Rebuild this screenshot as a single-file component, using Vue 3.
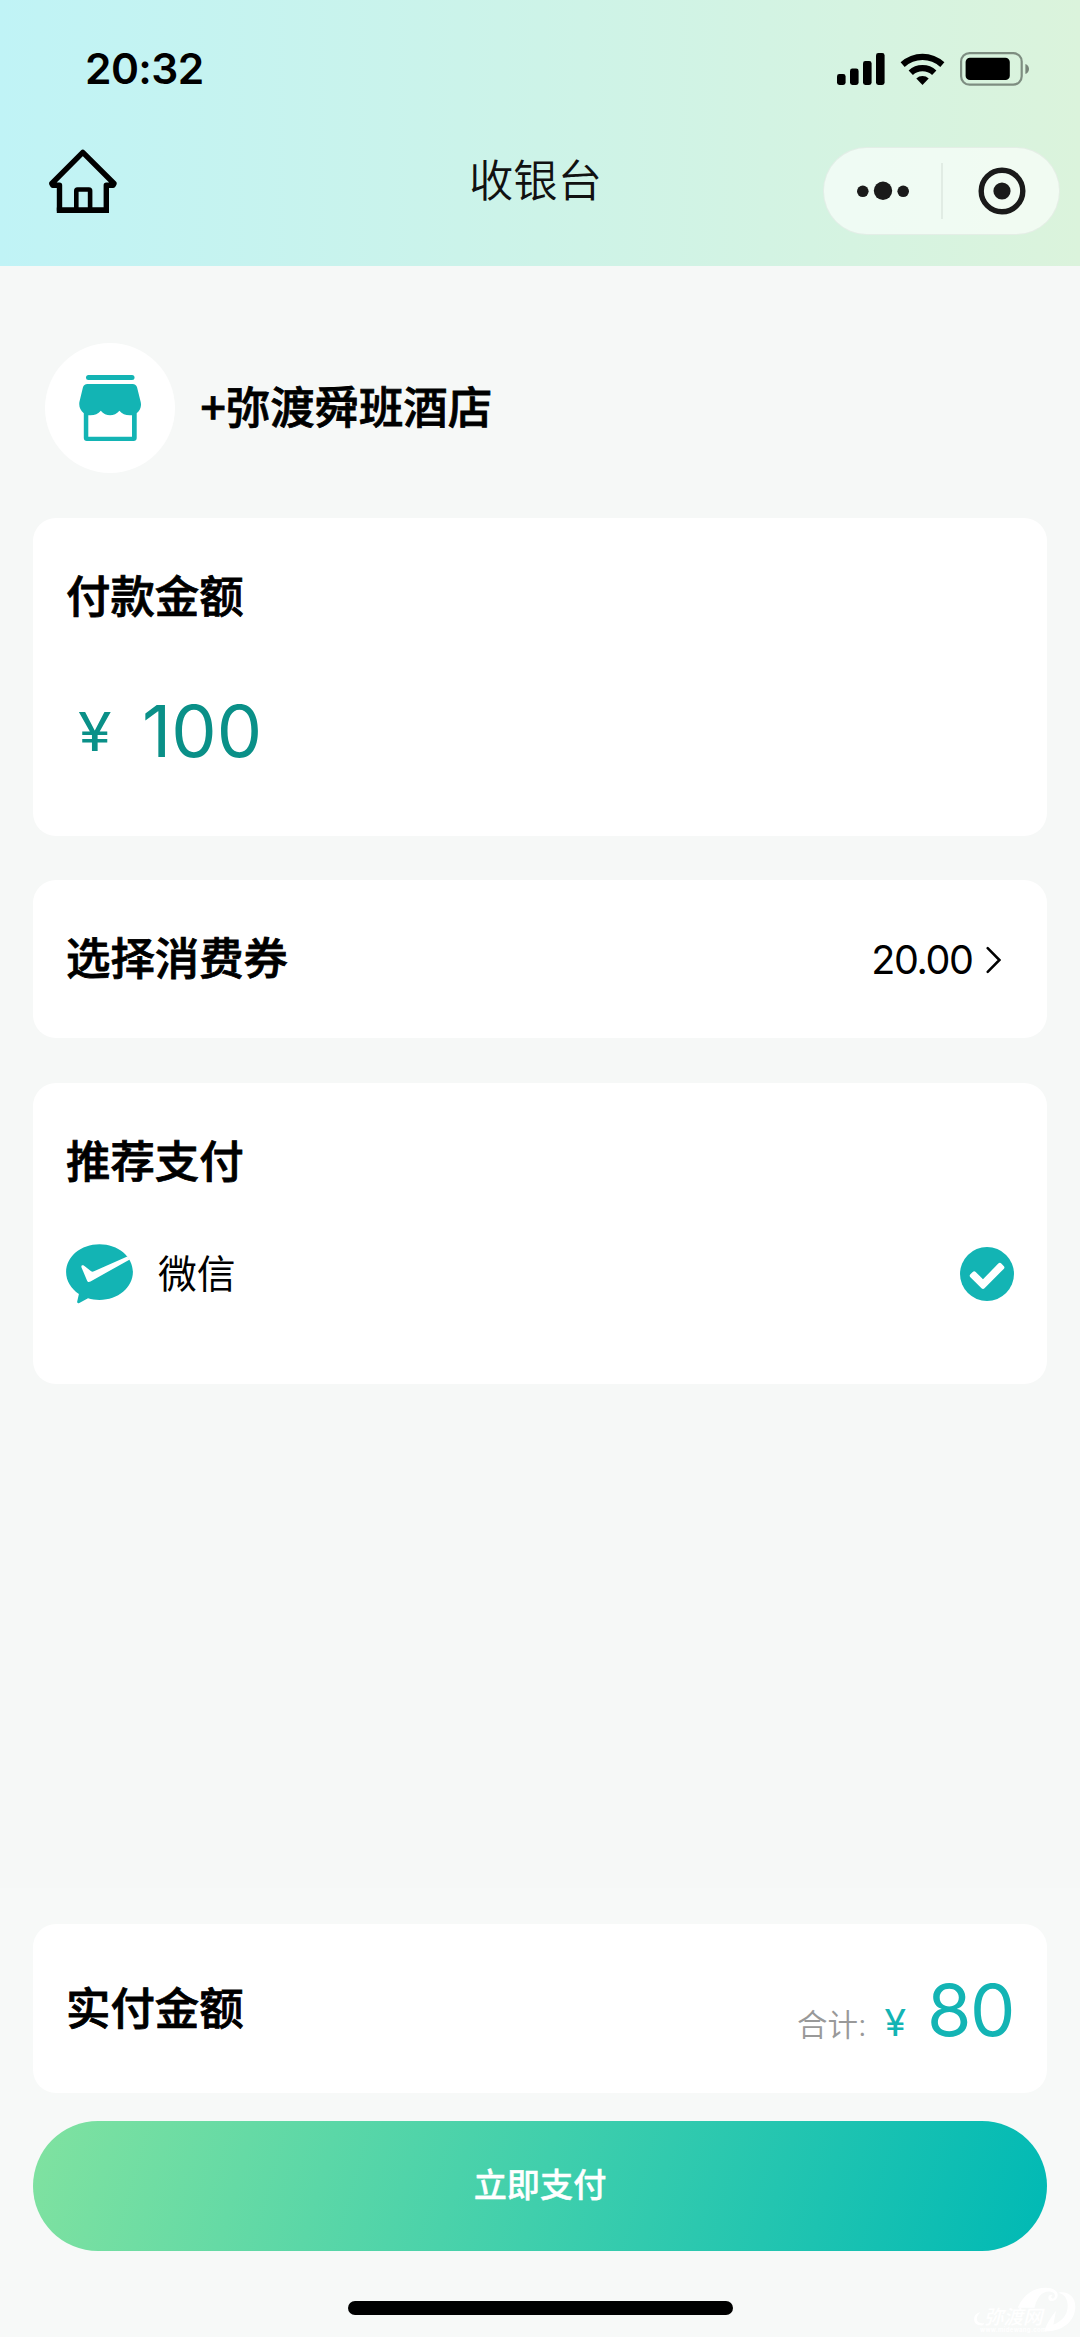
<script setup>
const signalBars = [
  { x: 0, h: 11 },
  { x: 13, h: 16.5 },
  { x: 26, h: 24 },
  { x: 39, h: 32 },
]
const shop = '+弥渡舜班酒店'
const amount = 100
const coupon = '20.00'
const total = 80
</script>

<template>
  <div class="page">
    <header class="header">
      <div class="status">
        <span class="time">20:32</span>
        <div class="status-icons">
          <svg class="signal" width="48" height="34" viewBox="0 0 48 34">
            <rect v-for="b in signalBars" :key="b.x" :x="b.x" :y="33 - b.h" width="8.6" :height="b.h" rx="2.4" />
          </svg>
          <svg class="wifi" width="46" height="34" viewBox="0 0 46 34">
            <path d="M.6 10.2a32.5 32.5 0 0 1 43.8 0L40.3 15a26.3 26.3 0 0 0-35.6 0z" />
            <path d="M8.6 18.4a20.6 20.6 0 0 1 27.8 0l-4.3 4.7a14.2 14.2 0 0 0-19.2 0z" />
            <path d="M16.3 26.4a9 9 0 0 1 12.4 0L22.5 33z" />
          </svg>
          <svg class="battery" width="70" height="34" viewBox="0 0 70 34">
            <rect x="1.1" y="1.1" width="60.6" height="31.6" rx="8.5" fill="none" stroke="#000" stroke-opacity=".42" stroke-width="2.2" />
            <rect x="5.6" y="5.7" width="44.2" height="22.4" rx="4.4" />
            <path d="M65.4 12c4.8 1.5 4.8 8.4 0 9.9z" fill-opacity=".45" />
          </svg>
        </div>
      </div>
      <div class="nav">
        <svg class="home" width="68" height="66" viewBox="0 0 68 66" fill="none" stroke="#000" stroke-width="5.4">
          <path d="M10.5 36.2H3.6L2.8 34.5 33.8 3.3 65 34.5l-.8 1.7h-6.9V61.2H10.5z" stroke-linejoin="round" />
          <path d="M7.8 61.2h52.2" />
          <path d="M27.3 61V41.7c0-.7.5-1.2 1.2-1.2h11.4c.7 0 1.2.5 1.2 1.2V61" stroke-width="4.6" />
        </svg>
        <h1 class="title">收银台</h1>
        <div class="capsule">
          <svg class="dots" width="52" height="20" viewBox="0 0 52 20" fill="#1a1a1a">
            <circle cx="5.8" cy="10.3" r="5.8" /><circle cx="26" cy="9.8" r="9.2" /><circle cx="46.2" cy="10.3" r="5.8" />
          </svg>
          <i class="divider"></i>
          <svg class="ring" width="48" height="48" viewBox="0 0 48 48">
            <circle cx="24" cy="24" r="20.8" fill="none" stroke="#1a1a1a" stroke-width="5.4" />
            <circle cx="24" cy="24" r="8.6" fill="#1a1a1a" />
          </svg>
        </div>
      </div>
    </header>

    <main class="content">
      <section class="shop">
        <div class="avatar">
          <svg width="62" height="66" viewBox="0 0 62 66" fill="#13b4b4">
            <rect x="7" y="0" width="48.5" height="5" rx="2.5" />
            <path d="M8.5 9h45c2.5 0 4 1.5 4.6 3.5l3.6 14.5c1 4.5-.5 8.5-4 11.2V63c0 1.800-1.200 3-3 3H7.800c-1.800 0-3-1.200-3-3V38.200C1.300 35.500-.3 31.500.4 27L3.900 12.500C4.500 10.500 6 9 8.500 9z" />
            <path d="M9.3 40.2c5.4.6 9.5-1 12.5-4.5 5 6 13.500 6 18.600 0 3 3.500 7.200 5.200 12.600 4.500V61.700H9.300z" fill="#fff" />
          </svg>
        </div>
        <h2 class="label">{{ shop }}</h2>
      </section>

      <section class="card amount-card">
        <h2 class="label">付款金额</h2>
        <p class="amount"><span class="yen">¥</span><span class="value">{{ amount }}</span></p>
      </section>

      <section class="card coupon-card">
        <h2 class="label">选择消费券</h2>
        <div class="coupon">
          <span>{{ coupon }}</span>
          <svg width="15" height="28" viewBox="0 0 15 28" fill="none" stroke="#000" stroke-width="2.5" stroke-linecap="round">
            <path d="M1.7 2.2 13.4 14 1.7 25.8" />
          </svg>
        </div>
      </section>

      <section class="card method-card">
        <h2 class="label">推荐支付</h2>
        <div class="method">
          <svg width="67" height="60" viewBox="0 0 67 60">
            <path d="M33.5.2C52 .2 66.9 12.6 66.9 28S52 55.9 33.5 55.9c-4 0-8-.6-11.5-1.7l-8.7 4.8c-1.3.6-2.4 0-2.1-1.4l1.700-7.600C5 44.700.1 36.900.1 28 .1 12.600 15 .2 33.500.2z" fill="#13b4b4" />
            <path d="M17.8 21.6c-1.5-1-2.9 0-2.3 1.8l5.6 13.3c.7 1.5 1.8 1.6 3.4.8L63.8 15.400l-2.500-3L28 27.300c-1.300.6-2.100.5-3.200-.3z" fill="#fff" />
          </svg>
          <span class="method-name">微信</span>
          <svg class="check" width="54" height="54" viewBox="0 0 54 54">
            <circle cx="27" cy="27" r="27" fill="#13b4b4" />
            <path d="M10.4 30.2c-1-1-1-2 0-3l2.3-2.3c1-1 2-1 3 0l7.3 7.3 15.3-15.600c1-1 2-1 3 0l2.400 2.300c1 1 1 2 0 3L24.500 41.300c-1 1-2 1-3 0z" fill="#fff" />
          </svg>
        </div>
      </section>
    </main>

    <footer class="footer">
      <section class="card total-card">
        <h2 class="label">实付金额</h2>
        <p class="total"><span class="total-label">合计:</span><span class="total-yen">¥</span><span class="total-value">{{ total }}</span></p>
      </section>
      <button class="pay"><span>立即支付</span></button>
      <i class="indicator"></i>
      <div class="mark">
        <svg width="104" height="46" viewBox="128 108 312 138" fill="#fff">
          <path d="M262 170c18-40 48-60 84-60 22 0 38 10 36 24-2 18-28 22-28 7 0-8 8-12 13-8-6 2-6 9 0 10 10-2 10-19-6-21-26-3-42 18-48 48z" />
          <path d="M384 125c26-6 51 10 51 42 0 42-38 76-94 74 8-22 20-42 36-62l-8 42c28-10 44-32 43-58-1-22-10-34-28-38z" />
          <path d="M150 184c-16 4-20 14-18 26 2 10 12 14 26 13l4-6c-12 1-20-2-22-9-2-8 2-16 10-24z" />
        </svg>
        <span class="mark-name">弥渡网</span>
        <span class="mark-url">www.midewang.com</span>
      </div>
    </footer>
  </div>
</template>

<style>
body {
  margin: 0;
}
</style>

<style scoped>
.page {
  position: relative;
  display: flex;
  flex-direction: column;
  width: 1080px;
  height: 2337px;
  overflow: hidden;
  background: #f6f8f7;
  color: #000;
  font-family: Inter, "Noto Sans CJK SC", sans-serif;
}
h1, h2, p {
  margin: 0;
}
svg {
  display: block;
  flex: none;
}
.header {
  flex: none;
  height: 265.6px;
  background: linear-gradient(90deg, #c0f3f6 0%, #cdf3e8 50%, #dbf3dc 100%);
}
.status {
  display: flex;
  justify-content: space-between;
  align-items: center;
  height: 137px;
  padding: 0 50px 0 85px;
  box-sizing: border-box;
}
.time {
  font-size: 42.5px;
  font-weight: 600;
  line-height: 50px;
  letter-spacing: -.6px;
}
.status-icons {
  display: flex;
  align-items: center;
}
.wifi {
  margin-left: 15px;
}
.battery {
  margin-left: 14px;
}
.nav {
  display: grid;
  grid-template-columns: 1fr auto 1fr;
  align-items: start;
  padding: 10px 20px 0 49px;
}
.home {
  margin-top: 2px;
}
.title {
  margin: 2px 38px 0 0;
  font-size: 44.3px;
  line-height: 64px;
  font-weight: 350;
  color: #111;
}
.capsule {
  justify-self: end;
  display: flex;
  align-items: center;
  width: 237px;
  height: 88px;
  box-sizing: border-box;
  border: 1px solid rgba(0, 0, 0, .05);
  border-radius: 44px;
  background: rgba(255, 255, 255, .62);
}
.dots {
  margin-left: 33px;
}
.divider {
  width: 2px;
  height: 56px;
  margin: 0 35px 0 32px;
  background: rgba(0, 0, 0, .06);
}
.content {
  flex: 1;
  padding: 77.4px 33px 0;
}
.label {
  padding-bottom: 6px;
  font-family: "Noto Sans CJK SC", sans-serif;
  font-size: 44.4px;
  line-height: 60px;
  font-weight: 500;
  -webkit-text-stroke: .8px #000;
}
.shop {
  display: flex;
  align-items: center;
  height: 130px;
  margin-bottom: 45px;
  padding-left: 11.5px;
}
.avatar {
  display: flex;
  align-items: center;
  justify-content: center;
  width: 130px;
  height: 130px;
  margin-right: 26px;
  border-radius: 50%;
  background: #fff;
}
.card {
  box-sizing: border-box;
  padding: 0 33px;
  border-radius: 23px;
  background: #fff;
}
.amount-card {
  height: 318px;
  padding-top: 46px;
  margin-bottom: 44px;
}
.amount {
  display: flex;
  align-items: baseline;
  margin-top: 56px;
  color: #0a9088;
  line-height: 90px;
}
.yen {
  position: relative;
  top: -6px;
  width: 64px;
  margin-left: 12px;
  font-size: 54px;
  transform: scaleX(1.13);
  transform-origin: 0 50%;
}
.value {
  font-size: 72px;
}
.coupon-card {
  display: flex;
  align-items: center;
  justify-content: space-between;
  height: 158px;
  margin-bottom: 45px;
}
.coupon {
  display: flex;
  align-items: center;
  gap: 13.5px;
  margin: 2px 13px 0 0;
  font-size: 39.5px;
  letter-spacing: -1.4px;
}
.method-card {
  height: 301px;
  padding-top: 46px;
}
.method {
  display: flex;
  align-items: center;
  margin-top: 47.5px;
  height: 64px;
}
.method-name {
  margin: -6px 0 0 25px;
  font-size: 38.8px;
}
.check {
  margin-left: auto;
}
.footer {
  flex: none;
  display: flex;
  flex-direction: column;
  height: 449px;
  padding: 36px 33px 0;
  box-sizing: border-box;
  background: #f7f9f8;
}
.total-card {
  display: flex;
  align-items: center;
  justify-content: space-between;
  height: 169px;
}
.total {
  display: flex;
  align-items: baseline;
  padding-top: 2px;
  color: #13b4b4;
}
.total-label {
  font-size: 30.5px;
  color: #999;
  font-weight: 350;
}
.total-yen {
  margin: 0 22px 0 18px;
  font-size: 37px;
  transform: scaleX(1.06);
}
.total-value {
  font-size: 72px;
  letter-spacing: -1.5px;
}
.pay {
  height: 130px;
  margin-top: 28px;
  padding: 0 0 6px;
  border: 0;
  border-radius: 65px;
  background: linear-gradient(106deg, #80e2a0 0%, #40cfac 50%, #00b9b5 100%);
  color: #fff;
  font: 500 33.2px/48px "Noto Sans CJK SC", sans-serif;
  -webkit-text-stroke: .4px #fff;
}
.indicator {
  align-self: center;
  width: 385px;
  height: 14px;
  margin-top: 50px;
  border-radius: 7px;
  background: #000;
}
.mark {
  position: absolute;
  right: 3px;
  bottom: 4px;
  width: 104px;
  height: 46px;
  color: #fff;
}
.mark-name {
  position: absolute;
  left: 11px;
  top: 20px;
  font-size: 19.5px;
  line-height: 20px;
  font-style: italic;
  font-weight: 500;
}
.mark-url {
  position: absolute;
  left: 7px;
  bottom: -1px;
  font-size: 6px;
  line-height: 8px;
  font-weight: 700;
  letter-spacing: .3px;
}
</style>
